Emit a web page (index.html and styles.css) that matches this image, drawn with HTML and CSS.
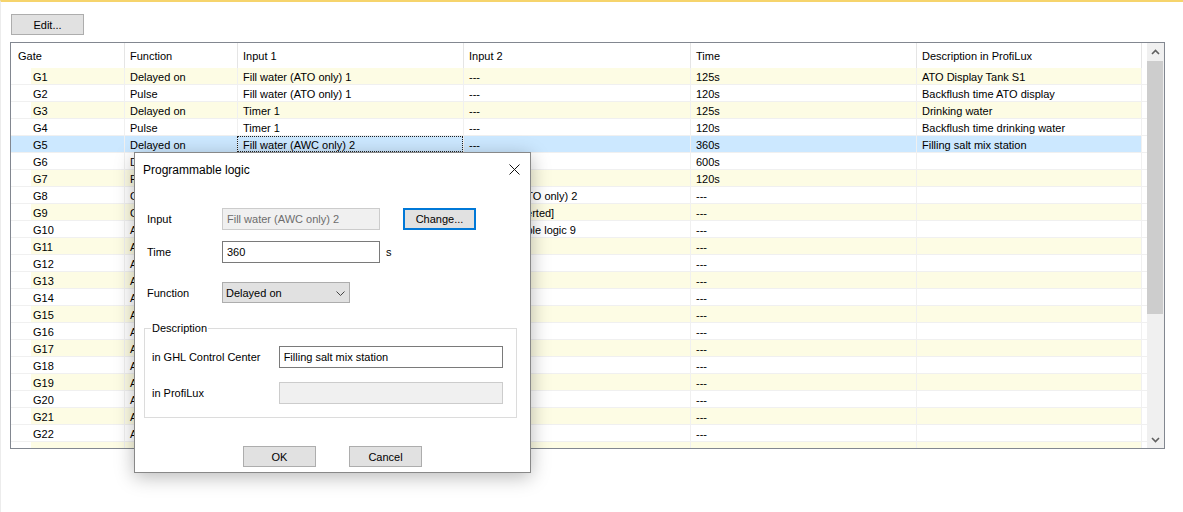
FILE: index.html
```html
<!DOCTYPE html>
<html lang="en">
<head>
    <meta charset="UTF-8">
    <meta name="viewport" content="width=device-width, initial-scale=1.0">
    <title>Programmable logic</title>
    <link rel="stylesheet" href="styles.css">
</head>
<body>
    <div class="page">
        <button class="btn edit-btn">Edit...</button>

        <div class="listview">
            <div class="list">
                <div class="row head">
                    <div class="cell gate">Gate</div>
                    <div class="cell">Function</div>
                    <div class="cell">Input 1</div>
                    <div class="cell">Input 2</div>
                    <div class="cell">Time</div>
                    <div class="cell">Description in ProfiLux</div>
                    <div class="cell fill"></div>
                </div>
                <div class="row alt">
                    <div class="cell gate">G1</div><div class="cell">Delayed on</div><div class="cell">Fill water (ATO only) 1</div><div class="cell">---</div><div class="cell">125s</div><div class="cell">ATO Display Tank S1</div><div class="cell fill"></div>
                </div>
                <div class="row">
                    <div class="cell gate">G2</div><div class="cell">Pulse</div><div class="cell">Fill water (ATO only) 1</div><div class="cell">---</div><div class="cell">120s</div><div class="cell">Backflush time ATO display</div><div class="cell fill"></div>
                </div>
                <div class="row alt">
                    <div class="cell gate">G3</div><div class="cell">Delayed on</div><div class="cell">Timer 1</div><div class="cell">---</div><div class="cell">125s</div><div class="cell">Drinking water</div><div class="cell fill"></div>
                </div>
                <div class="row">
                    <div class="cell gate">G4</div><div class="cell">Pulse</div><div class="cell">Timer 1</div><div class="cell">---</div><div class="cell">120s</div><div class="cell">Backflush time drinking water</div><div class="cell fill"></div>
                </div>
                <div class="row sel">
                    <div class="cell gate">G5</div><div class="cell">Delayed on</div><div class="cell focus">Fill water (AWC only) 2</div><div class="cell">---</div><div class="cell">360s</div><div class="cell">Filling salt mix station</div><div class="cell fill"></div>
                </div>
                <div class="row">
                    <div class="cell gate">G6</div><div class="cell">Delayed on</div><div class="cell">Fill water (AWC only) 1</div><div class="cell">---</div><div class="cell">600s</div><div class="cell"></div><div class="cell fill"></div>
                </div>
                <div class="row alt">
                    <div class="cell gate">G7</div><div class="cell">Pulse</div><div class="cell">Fill water (AWC only) 1</div><div class="cell">---</div><div class="cell">120s</div><div class="cell"></div><div class="cell fill"></div>
                </div>
                <div class="row">
                    <div class="cell gate">G8</div><div class="cell">OR</div><div class="cell">Fill water (ATO only) 1</div><div class="cell">Fill water (ATO only) 2</div><div class="cell">---</div><div class="cell"></div><div class="cell fill"></div>
                </div>
                <div class="row alt">
                    <div class="cell gate">G9</div><div class="cell">OR</div><div class="cell">Timer 2</div><div class="cell">Timer 1 [inverted]</div><div class="cell">---</div><div class="cell"></div><div class="cell fill"></div>
                </div>
                <div class="row">
                    <div class="cell gate">G10</div><div class="cell">AND</div><div class="cell">Timer 3</div><div class="cell">Programmable logic 9</div><div class="cell">---</div><div class="cell"></div><div class="cell fill"></div>
                </div>
                <div class="row alt">
                    <div class="cell gate">G11</div><div class="cell">AND</div><div class="cell">---</div><div class="cell">---</div><div class="cell">---</div><div class="cell"></div><div class="cell fill"></div>
                </div>
                <div class="row">
                    <div class="cell gate">G12</div><div class="cell">AND</div><div class="cell">---</div><div class="cell">---</div><div class="cell">---</div><div class="cell"></div><div class="cell fill"></div>
                </div>
                <div class="row alt">
                    <div class="cell gate">G13</div><div class="cell">AND</div><div class="cell">---</div><div class="cell">---</div><div class="cell">---</div><div class="cell"></div><div class="cell fill"></div>
                </div>
                <div class="row">
                    <div class="cell gate">G14</div><div class="cell">AND</div><div class="cell">---</div><div class="cell">---</div><div class="cell">---</div><div class="cell"></div><div class="cell fill"></div>
                </div>
                <div class="row alt">
                    <div class="cell gate">G15</div><div class="cell">AND</div><div class="cell">---</div><div class="cell">---</div><div class="cell">---</div><div class="cell"></div><div class="cell fill"></div>
                </div>
                <div class="row">
                    <div class="cell gate">G16</div><div class="cell">AND</div><div class="cell">---</div><div class="cell">---</div><div class="cell">---</div><div class="cell"></div><div class="cell fill"></div>
                </div>
                <div class="row alt">
                    <div class="cell gate">G17</div><div class="cell">AND</div><div class="cell">---</div><div class="cell">---</div><div class="cell">---</div><div class="cell"></div><div class="cell fill"></div>
                </div>
                <div class="row">
                    <div class="cell gate">G18</div><div class="cell">AND</div><div class="cell">---</div><div class="cell">---</div><div class="cell">---</div><div class="cell"></div><div class="cell fill"></div>
                </div>
                <div class="row alt">
                    <div class="cell gate">G19</div><div class="cell">AND</div><div class="cell">---</div><div class="cell">---</div><div class="cell">---</div><div class="cell"></div><div class="cell fill"></div>
                </div>
                <div class="row">
                    <div class="cell gate">G20</div><div class="cell">AND</div><div class="cell">---</div><div class="cell">---</div><div class="cell">---</div><div class="cell"></div><div class="cell fill"></div>
                </div>
                <div class="row alt">
                    <div class="cell gate">G21</div><div class="cell">AND</div><div class="cell">---</div><div class="cell">---</div><div class="cell">---</div><div class="cell"></div><div class="cell fill"></div>
                </div>
                <div class="row">
                    <div class="cell gate">G22</div><div class="cell">AND</div><div class="cell">---</div><div class="cell">---</div><div class="cell">---</div><div class="cell"></div><div class="cell fill"></div>
                </div>
                <div class="row alt">
                    <div class="cell gate"></div><div class="cell"></div><div class="cell"></div><div class="cell"></div><div class="cell"></div><div class="cell"></div><div class="cell fill"></div>
                </div>
            </div>

            <div class="scrollbar">
                <div class="arrow">
                    <svg width="9" height="6" viewBox="0 0 9 6"><polyline points="1,5 4.5,1.5 8,5" fill="none" stroke="#606060" stroke-width="1.6"/></svg>
                </div>
                <div class="thumb"></div>
                <div class="track"></div>
                <div class="arrow">
                    <svg width="9" height="6" viewBox="0 0 9 6"><polyline points="1,1 4.5,4.5 8,1" fill="none" stroke="#606060" stroke-width="1.6"/></svg>
                </div>
            </div>
        </div>
    </div>

    <div class="dialog">
        <div class="titlebar">
            <span>Programmable logic</span>
            <svg width="11" height="11" viewBox="0 0 11 11"><path d="M0.5 0.5 L10.5 10.5 M10.5 0.5 L0.5 10.5" stroke="#111" stroke-width="1"/></svg>
        </div>

        <div class="form">
            <div class="field-row first">
                <label class="label">Input</label>
                <div class="textbox disabled wide">Fill water (AWC only) 2</div>
                <button class="btn change-btn">Change...</button>
            </div>
            <div class="field-row time-row">
                <label class="label">Time</label>
                <div class="textbox wide">360</div>
                <span class="unit">s</span>
            </div>
            <div class="field-row func-row">
                <label class="label">Function</label>
                <div class="combo">
                    <span>Delayed on</span>
                    <svg width="9" height="5" viewBox="0 0 9 5"><polyline points="0.5,0.5 4.5,4.5 8.5,0.5" fill="none" stroke="#444" stroke-width="1"/></svg>
                </div>
            </div>

            <fieldset class="group">
                <legend>Description</legend>
                <div class="group-row first">
                    <label class="group-label">in GHL Control Center</label>
                    <div class="textbox long">Filling salt mix station</div>
                </div>
                <div class="group-row">
                    <label class="group-label">in ProfiLux</label>
                    <div class="textbox disabled long"></div>
                </div>
            </fieldset>
        </div>

        <div class="actions">
            <button class="btn">OK</button>
            <button class="btn">Cancel</button>
        </div>
    </div>
</body>
</html>
```

FILE: styles.css
```css
* {
    box-sizing: border-box;
}

body {
    margin: 0;
    height: 512px;
    overflow: hidden;
    background: #fff;
    border-top: 2px solid #f6d46c;
    border-left: 1px solid #ececec;
    font-family: "Liberation Sans", Arial, sans-serif;
    font-size: 11px;
    color: #000;
}

.page {
    padding: 12px 0 0 9px;
}

.btn {
    width: 73px;
    height: 21px;
    padding: 0;
    background: #e1e1e1;
    border: 1px solid #adadad;
    font-family: inherit;
    font-size: 11px;
    color: #000;
}

.edit-btn {
    display: block;
    margin-left: 1px;
}

/* list view */

.listview {
    display: flex;
    width: 1155px;
    height: 407px;
    margin-top: 7px;
    border: 1px solid #828790;
}

.list {
    width: 1136px;
    overflow: hidden;
}

.row {
    display: grid;
    grid-template-columns: 113px 113px 226px 227px 226px 225px 6px;
    height: 17px;
    border-bottom: 1px solid #f0f0f0;
}

.cell {
    padding: 1px 0 0 5px;
    border-left: 1px solid #f0f0f0;
    line-height: 16px;
    white-space: nowrap;
    overflow: hidden;
}

.cell.gate {
    padding-left: 22px;
    border-left: none;
}

.cell.fill {
    padding: 0;
}

.row.head {
    height: 25px;
    border-bottom: none;
}

.row.head .cell {
    line-height: 24px;
    border-left-color: #e5e5e5;
}

.row.head .cell.gate {
    padding-left: 7px;
}

.row.alt .cell {
    background: #fdfce4;
}

.row.alt .cell.gate {
    background: linear-gradient(to right, #fff 20px, #fdfce4 20px);
}

.row.alt .cell.fill {
    background: none;
}

.row.sel .cell {
    background: #cce8ff;
}

.row.sel .cell.fill {
    background: none;
}

.cell.focus {
    outline: 1px dotted #222;
    outline-offset: -1px;
}

.scrollbar {
    display: flex;
    flex-direction: column;
    width: 17px;
    background: #f0f0f0;
}

.arrow {
    display: flex;
    align-items: center;
    justify-content: center;
    height: 17px;
}

.thumb {
    height: 253px;
    margin: 1px 1px 0 0;
    background: #cdcdcd;
}

.track {
    flex: 1;
}

/* dialog */

.dialog {
    position: absolute;
    left: 134px;
    top: 152px;
    width: 397px;
    height: 321px;
    background: #fff;
    border: 1px solid #888;
    box-shadow: 0 4px 18px rgba(0, 0, 0, 0.28);
}

.titlebar {
    display: flex;
    align-items: center;
    justify-content: space-between;
    height: 32px;
    padding: 1px 10px 0 8px;
    font-size: 12px;
}

.form {
    padding: 0 13px 0 9px;
}

.field-row {
    display: flex;
    align-items: center;
    height: 22px;
    padding-left: 3px;
}

.field-row.first {
    margin-top: 23px;
}

.time-row {
    margin-top: 11px;
}

.func-row {
    height: 21px;
    margin-top: 19px;
}

.label {
    width: 75px;
}

.textbox {
    height: 22px;
    padding-left: 4px;
    line-height: 21px;
    background: #fff;
    border: 1px solid #7a7a7a;
    white-space: nowrap;
}

.textbox.disabled {
    background: #f0f0f0;
    border-color: #cccccc;
    color: #6d6d6d;
}

.textbox.wide {
    width: 158px;
}

.textbox.long {
    width: 225px;
}

.change-btn {
    height: 22px;
    margin-left: 23px;
    border: 2px solid #0078d7;
}

.unit {
    margin-left: 6px;
}

.combo {
    display: flex;
    align-items: center;
    justify-content: space-between;
    width: 128px;
    height: 21px;
    padding: 1px 4px 0 3px;
    background: #e1e1e1;
    border: 1px solid #adadad;
}

.group {
    margin: 18px 0 0 0;
    padding: 0 13px 13px 6px;
    border: 1px solid #dcdcdc;
    min-width: 0;
}

.group legend {
    padding: 0 1px;
    line-height: 14px;
}

.group-row {
    display: flex;
    align-items: center;
    margin-top: 14px;
    padding-left: 1px;
}

.group-row.first {
    margin-top: 11px;
}

.group-label {
    width: 127px;
}

.actions {
    display: flex;
    justify-content: center;
    gap: 33px;
    margin-top: 28px;
}
```
